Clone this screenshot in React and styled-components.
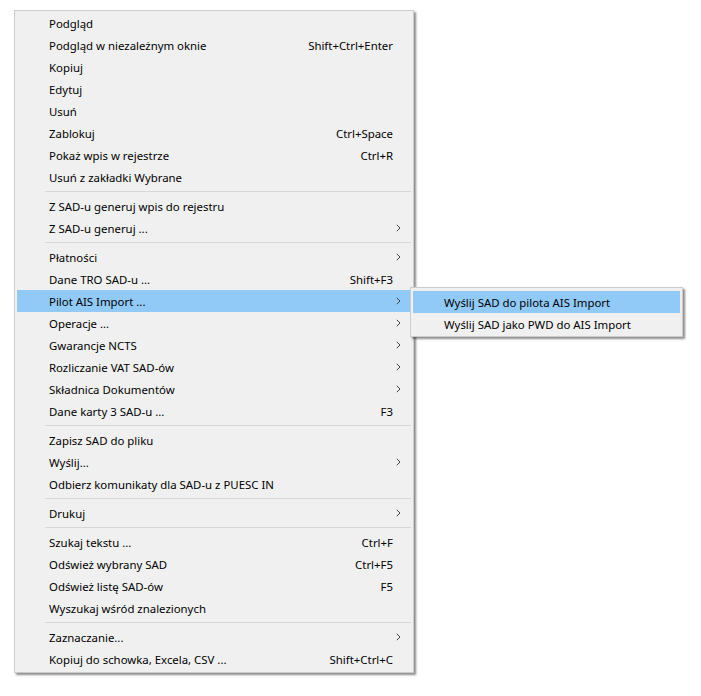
import React from "react";
import styled, { createGlobalStyle } from "styled-components";

const GlobalStyle = createGlobalStyle`
  html, body {
    margin: 0;
    padding: 0;
    background: #ffffff;
  }
  body {
    font-family: "Noto Sans", "Open Sans", sans-serif;
    font-size: 11.4px;
    color: #000;
  }
`;

const Page = styled.div`
  padding: 10px 0 0 14px;
  width: 701px;
  height: 696px;
  box-sizing: border-box;
`;

const Menu = styled.div`
  position: relative;
  width: ${(p) => p.$width}px;
  box-sizing: border-box;
  background: #f0f0f0;
  border: 1px solid #cccccc;
  padding: ${(p) => p.$pad};
  box-shadow: 2px 2px 2px rgba(0, 0, 0, 0.45);
`;

const Item = styled.div`
  position: relative;
  display: flex;
  align-items: center;
  height: 22px;
  padding-left: ${(p) => p.$indent}px;
  padding-right: 18px;
  background: ${(p) => (p.$active ? "#91c9f7" : "transparent")};
  white-space: nowrap;
`;

const Label = styled.span`
  flex: 1;
`;

const Shortcut = styled.span`
  margin-left: 24px;
`;

const Arrow = styled.span`
  position: absolute;
  right: 10px;
  top: 7px;
  width: 5px;
  height: 8px;
  display: flex;
`;

const Separator = styled.div`
  height: 1px;
  margin: 3px 0 3px 28px;
  background: #d7d7d7;
`;

const SubMenuWrap = styled.div`
  position: absolute;
  top: -3px;
  left: calc(100% - 1px);
  z-index: 2;
`;

const Chevron = () => (
  <svg width="5" height="8" viewBox="0 0 5 8">
    <path d="M0.8 0.8 L4 4 L0.8 7.2" fill="none" stroke="#444" strokeWidth="1" />
  </svg>
);

const groups = [
  [
    { label: "Podgląd" },
    { label: "Podgląd w niezależnym oknie", shortcut: "Shift+Ctrl+Enter" },
    { label: "Kopiuj" },
    { label: "Edytuj" },
    { label: "Usuń" },
    { label: "Zablokuj", shortcut: "Ctrl+Space" },
    { label: "Pokaż wpis w rejestrze", shortcut: "Ctrl+R" },
    { label: "Usuń z zakładki Wybrane" },
  ],
  [
    { label: "Z SAD-u generuj wpis do rejestru" },
    { label: "Z SAD-u generuj ...", sub: true },
  ],
  [
    { label: "Płatności", sub: true },
    { label: "Dane TRO SAD-u ...", shortcut: "Shift+F3" },
    { label: "Pilot AIS Import ...", sub: true, active: true, open: true },
    { label: "Operacje ...", sub: true },
    { label: "Gwarancje NCTS", sub: true },
    { label: "Rozliczanie VAT SAD-ów", sub: true },
    { label: "Składnica Dokumentów", sub: true },
    { label: "Dane karty 3 SAD-u ...", shortcut: "F3" },
  ],
  [
    { label: "Zapisz SAD do pliku" },
    { label: "Wyślij...", sub: true },
    { label: "Odbierz komunikaty dla SAD-u z PUESC IN" },
  ],
  [{ label: "Drukuj", sub: true }],
  [
    { label: "Szukaj tekstu ...", shortcut: "Ctrl+F" },
    { label: "Odśwież wybrany SAD", shortcut: "Ctrl+F5" },
    { label: "Odśwież listę SAD-ów", shortcut: "F5" },
    { label: "Wyszukaj wśród znalezionych" },
  ],
  [
    { label: "Zaznaczanie...", sub: true },
    { label: "Kopiuj do schowka, Excela, CSV ...", shortcut: "Shift+Ctrl+C" },
  ],
];

const subItems = [
  { label: "Wyślij SAD do pilota AIS Import", active: true },
  { label: "Wyślij SAD jako PWD do AIS Import" },
];

const SubMenu = () => (
  <SubMenuWrap>
    <Menu $width={273} $pad="3px 2px 1px 2px">
      {subItems.map((it) => (
        <Item key={it.label} $indent={31} $active={it.active}>
          <Label>{it.label}</Label>
        </Item>
      ))}
    </Menu>
  </SubMenuWrap>
);

const App = () => (
  <>
    <GlobalStyle />
    <Page>
      <Menu $width={400} $pad="1px 2px 2px 2px">
        {groups.map((group, gi) => (
          <React.Fragment key={gi}>
            {gi > 0 && <Separator />}
            {group.map((it) => (
              <Item key={it.label} $indent={32} $active={it.active}>
                <Label>{it.label}</Label>
                {it.shortcut && <Shortcut>{it.shortcut}</Shortcut>}
                {it.sub && (
                  <Arrow>
                    <Chevron />
                  </Arrow>
                )}
                {it.open && <SubMenu />}
              </Item>
            ))}
          </React.Fragment>
        ))}
      </Menu>
    </Page>
  </>
);

export default App;
